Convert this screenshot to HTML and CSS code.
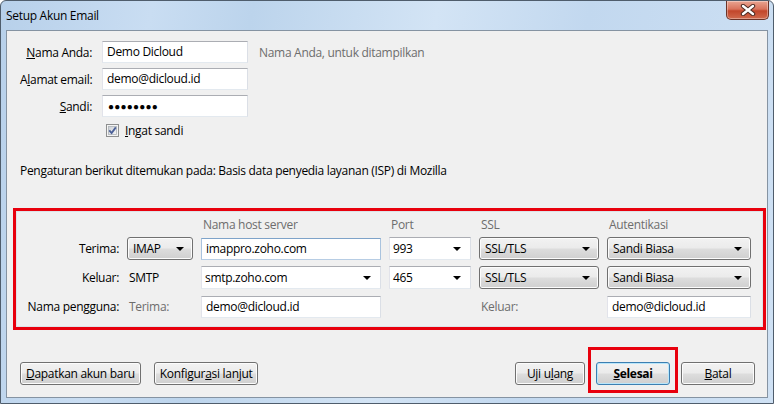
FILE: index.html
```html
<!DOCTYPE html>
<html lang="id">
<head>
  <meta charset="UTF-8">
  <title>Setup Akun Email</title>
  <link rel="stylesheet" href="styles.css">
</head>
<body>
  <div class="window">
    <div class="titlebar">
      <span class="title">Setup Akun Email</span>
      <div class="close-btn">
        <svg width="16" height="12" viewBox="0 0 16 12">
          <path d="M3 2 L13 10 M13 2 L3 10" stroke="#4a2a22" stroke-width="4.4" stroke-linecap="round"/>
          <path d="M3 2 L13 10 M13 2 L3 10" stroke="#ffffff" stroke-width="2.4" stroke-linecap="round"/>
        </svg>
      </div>
    </div>

    <div class="client">
      <div class="identity">
        <span class="lbl"><u>N</u>ama Anda:</span>
        <div class="textbox">Demo Dicloud</div>
        <span class="hint">Nama Anda, untuk ditampilkan</span>

        <span class="lbl">A<u>l</u>amat email:</span>
        <div class="textbox">demo@dicloud.id</div>
        <span></span>

        <span class="lbl"><u>S</u>andi:</span>
        <div class="textbox password">&#9679;&#9679;&#9679;&#9679;&#9679;&#9679;&#9679;&#9679;</div>
        <span></span>

        <span></span>
        <div class="check">
          <svg class="checkbox" width="13" height="13" viewBox="0 0 13 13">
            <defs>
              <linearGradient id="cb" x1="0" y1="0" x2="1" y2="1">
                <stop offset="0" stop-color="#cbcfd5"/>
                <stop offset="1" stop-color="#f6f6f6"/>
              </linearGradient>
            </defs>
            <rect x="0.5" y="0.5" width="12" height="12" fill="#f4f4f4" stroke="#8e8f8f"/>
            <rect x="2.5" y="2.5" width="8" height="8" fill="url(#cb)" stroke="#aeb3b9" stroke-width="0.8"/>
            <path d="M3.3 6.4 L5.6 9 L9.8 3.4" fill="none" stroke="#4a5f97" stroke-width="1.8"/>
          </svg>
          <span><u>I</u>ngat sandi</span>
        </div>
        <span></span>
      </div>

      <p class="found">Pengaturan berikut ditemukan pada: Basis data penyedia layanan (ISP) di Mozilla</p>

      <div class="settings">
        <div class="grid">
          <span></span>
          <span></span>
          <span class="head">Nama host server</span>
          <span class="head">Port</span>
          <span class="head">SSL</span>
          <span class="head">Autentikasi</span>

          <span class="lbl">Terima:</span>
          <div class="dropbtn"><span>IMAP</span><i class="arrow"></i></div>
          <div class="textbox focused">imappro.zoho.com</div>
          <div class="combo"><span>993</span><i class="arrow"></i></div>
          <div class="dropbtn"><span>SSL/TLS</span><i class="arrow"></i></div>
          <div class="dropbtn"><span>Sandi Biasa</span><i class="arrow"></i></div>

          <span class="lbl">Keluar:</span>
          <span class="plain">SMTP</span>
          <div class="combo"><span>smtp.zoho.com</span><i class="arrow"></i></div>
          <div class="combo"><span>465</span><i class="arrow"></i></div>
          <div class="dropbtn"><span>SSL/TLS</span><i class="arrow"></i></div>
          <div class="dropbtn"><span>Sandi Biasa</span><i class="arrow"></i></div>

          <span class="lbl">Nama pengguna:</span>
          <span class="plain muted">Terima:</span>
          <div class="textbox">demo@dicloud.id</div>
          <span></span>
          <span class="plain muted">Keluar:</span>
          <div class="textbox">demo@dicloud.id</div>
        </div>
      </div>

      <div class="footer">
        <div class="group">
          <button class="btn wide"><u>D</u>apatkan akun baru</button>
          <button class="btn wide">Konfigur<u>a</u>si lanjut</button>
        </div>
        <div class="group">
          <button class="btn">Uji u<u>l</u>ang</button>
          <button class="btn default marked"><u>S</u>elesai</button>
          <button class="btn"><u>B</u>atal</button>
        </div>
      </div>
    </div>
  </div>
</body>
</html>
```

FILE: styles.css
```css
html, body {
  margin: 0;
  padding: 0;
  background: #ffffff;
}
body {
  font-family: "Open Sans", "Noto Sans", sans-serif;
  font-size: 12px;
  letter-spacing: -0.3px;
  color: #000;
}
.window {
  width: 774px;
  height: 404px;
  box-sizing: border-box;
  display: flex;
  flex-direction: column;
  border: 1px solid #4f5d6c;
  border-radius: 6px 6px 0 0;
  background: linear-gradient(100deg, #b7d0ea 0%, #c9ddf2 18%, #bcd4ec 30%, #d3e4f5 52%, #c2d8ef 70%, #cfe1f4 100%);
  padding: 0 5px 5px 5px;
}
.titlebar {
  height: 29px;
  display: flex;
  justify-content: space-between;
  align-items: flex-start;
}
.title {
  margin-top: 6px;
  font-size: 12px;
  color: #000;
}
.close-btn {
  width: 43px;
  height: 19px;
  margin-right: -1px;
  box-sizing: border-box;
  border: 1px solid #6b3328;
  border-top: none;
  border-radius: 0 0 5px 5px;
  background: linear-gradient(#e9a592 0%, #d9735c 45%, #c2462b 55%, #d06a4d 100%);
  display: flex;
  align-items: center;
  justify-content: center;
  box-shadow: inset 0 0 0 1px rgba(255,255,255,0.35);
}
.client {
  flex: 1;
  background: #f0f0f0;
  border: 1px solid #8593a2;
  padding: 10px 12px 0 13px;
}

/* identitas */
.identity {
  display: grid;
  grid-template-columns: 72px 146px auto;
  grid-template-rows: 22px 22px 22px 16px;
  column-gap: 10px;
  row-gap: 5px;
  align-items: center;
}
.lbl {
  text-align: right;
  white-space: nowrap;
}
.hint {
  margin-left: 1px;
  color: #6d6d6d;
}
.textbox {
  height: 22px;
  box-sizing: border-box;
  background: #fff;
  border: 1px solid;
  border-color: #abadb3 #dbdfe6 #e3e9ef #e2e3ea;
  padding: 0 4px;
  line-height: 20px;
  white-space: nowrap;
  overflow: hidden;
}
.textbox.focused {
  border-color: #7ea3c9 #a9c3de #b7cde4 #a9c3de;
}
.password {
  font-size: 10px;
  letter-spacing: 0.2px;
  padding-left: 5px;
}
.check {
  display: flex;
  align-items: center;
  gap: 6px;
  margin-left: 4px;
}
.found {
  margin: 25px 0 0 0;
  line-height: 16px;
}

/* pengaturan server */
.settings {
  margin: 29px -11px 0 -7px;
  border: 3px solid #e8000d;
}
.grid {
  border: 1px solid #dde3e8;
  display: grid;
  grid-template-columns: 102px 66px 180px 82px 120px 144px;
  grid-template-rows: 13px 23px 23px 23px;
  column-gap: 8px;
  row-gap: 6px;
  align-items: center;
  padding: 6px 0 8px 0;
}
.head {
  color: #6d6d6d;
  margin-left: 2px;
}
.plain {
  margin-left: 2px;
}
.muted {
  color: #6d6d6d;
}
.dropbtn, .combo {
  height: 23px;
  box-sizing: border-box;
  display: flex;
  align-items: center;
  justify-content: space-between;
  white-space: nowrap;
}
.dropbtn {
  border: 1px solid #707070;
  border-radius: 3px;
  background: linear-gradient(#f2f2f2 0%, #ebebeb 48%, #dddddd 52%, #cfcfcf 100%);
  padding: 0 8px 0 5px;
  box-shadow: inset 0 0 0 1px #fcfcfc;
}
.combo {
  background: #fff;
  border: 1px solid;
  border-color: #abadb3 #dbdfe6 #e3e9ef #e2e3ea;
  padding: 0 9px 0 3px;
}
.arrow {
  width: 0;
  height: 0;
  border-left: 4px solid transparent;
  border-right: 4px solid transparent;
  border-top: 4px solid #000;
  margin-top: 1px;
}

/* tombol bawah */
.footer {
  display: flex;
  justify-content: space-between;
  margin-top: 32px;
}
.group {
  display: flex;
  gap: 13px;
}
.group:last-child {
  gap: 11px;
}
.btn {
  position: relative;
  height: 23px;
  min-width: 70px;
  padding: 0 6px;
  font-family: inherit;
  font-size: 12px;
  letter-spacing: -0.3px;
  color: #000;
  border: 1px solid #707070;
  border-radius: 3px;
  background: linear-gradient(#f2f2f2 0%, #ebebeb 48%, #dddddd 52%, #cfcfcf 100%);
  box-shadow: inset 0 0 0 1px #fcfcfc;
  line-height: 19px;
}
.btn.wide {
  padding: 0 5px;
}
.btn.default {
  min-width: 74px;
  font-weight: bold;
  border-color: #3c7fb1;
  box-shadow: inset 0 0 0 1px #b8e6fb;
}
.btn:last-child {
  min-width: 74px;
}
.marked::after {
  content: "";
  position: absolute;
  left: -9px;
  right: -9px;
  top: -16px;
  bottom: -9px;
  border: 3px solid #e8000d;
}
```
